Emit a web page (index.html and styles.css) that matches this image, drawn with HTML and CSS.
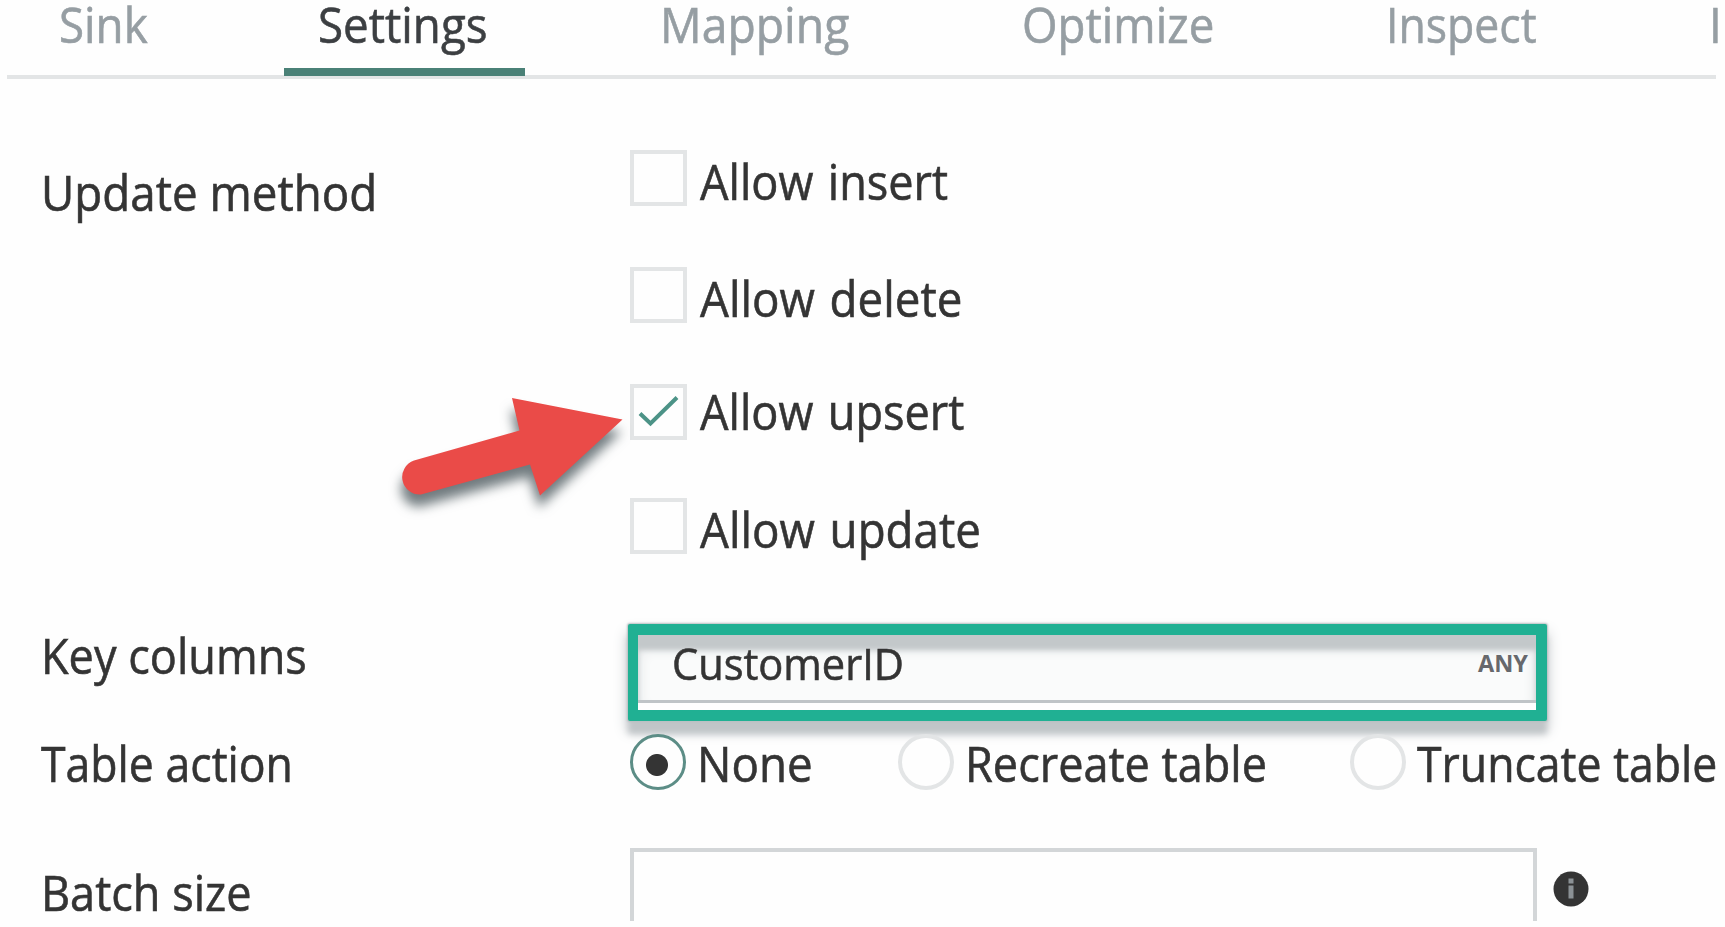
FILE: index.html
```html
<!DOCTYPE html>
<html lang="en">
<head>
<meta charset="utf-8">
<title>Sink settings</title>
<link rel="stylesheet" href="styles.css">
</head>
<body>
<nav class="tabs">
  <a class="tab"><span class="txt">Sink</span></a>
  <a class="tab active"><span class="txt">Settings</span></a>
  <a class="tab mapping"><span class="txt wide">Mapping</span></a>
  <a class="tab optimize"><span class="txt">Optimize</span></a>
  <a class="tab inspect"><span class="txt tight">Inspect</span></a>
  <a class="tab more"><span class="txt">I</span></a>
</nav>
<main class="form">
  <section class="row methods">
    <div class="label"><span class="txt">Update method</span></div>
    <div class="checks">
      <label class="check"><span class="box"></span><span class="txt snug">Allow insert</span></label>
      <label class="check"><span class="box"></span><span class="txt">Allow delete</span></label>
      <label class="check upsert"><span class="box"><svg viewBox="0 0 56 56"><path d="M10 29.500 20.500 39.500 47 13.500"/></svg></span><span class="txt snug">Allow upsert</span></label>
      <label class="check"><span class="box"></span><span class="txt">Allow update</span></label>
    </div>
  </section>
  <section class="row keys">
    <div class="label"><span class="txt snug">Key columns</span></div>
    <div class="frame">
      <div class="field"><span class="txt wide">CustomerID</span><span class="type">ANY</span></div>
    </div>
  </section>
  <section class="row action">
    <div class="label"><span class="txt tight">Table action</span></div>
    <div class="radios">
      <label class="radio on"><span class="ring"></span><span class="txt">None</span></label>
      <label class="radio"><span class="ring"></span><span class="txt snug">Recreate table</span></label>
      <label class="radio"><span class="ring"></span><span class="txt tight">Truncate table</span></label>
    </div>
  </section>
  <section class="row batch">
    <div class="label"><span class="txt snug">Batch size</span></div>
    <div class="input"></div>
    <svg class="info" viewBox="0 0 36 36"><circle cx="18" cy="18" r="17.500"/><path d="M18 7.500v5M18 14.500v13"/></svg>
  </section>
</main>
<svg class="arrow" viewBox="380 380 260 140"><path d="M622.500 419.500 512 398 519.500 430.500 414 460.500A17.500 17.500 0 0 0 421 494.500L530 464.500 540 495.500Z"/></svg>
</body>
</html>
```
FILE: styles.css
```css
* { box-sizing: border-box; }
body {
  margin: 0;
  width: 1725px;
  height: 927px;
  overflow: hidden;
  position: relative;
  background: #fefefe;
  color: #343434;
  font: 49px/56px "Open Sans", "Noto Sans", sans-serif;
}
.txt {
  display: block;
  white-space: nowrap;
  transform: scaleX(.933);
  transform-origin: 0 50%;
  -webkit-text-stroke: .6px currentColor;
}
.txt.wide { transform: scaleX(.945); }
.txt.snug { transform: scaleX(.92); }
.txt.tight { transform: scaleX(.91); }

.tabs {
  display: grid;
  grid-template-columns: 277px 241px 478px 363px 325px 25px;
  height: 79px;
  margin: 0 9px 0 7px;
  border-bottom: 4px solid #e3e5e6;
  line-height: 46px;
  color: #969ea3;
}
.tab { height: 76px; padding: .5px 0 0 52px; }
.tab.mapping { padding-left: 135px; }
.tab.optimize { padding-left: 19px; }
.tab.inspect { padding-left: 20px; }
.tab.more { padding-left: 18px; }
.tab.active { padding-left: 34px; border-bottom: 8px solid #4a8177; color: #3c3f42; z-index: 1; }

.form { padding: 71px 0 0 40px; }
.row { display: flex; align-items: flex-start; }
.label { width: 590px; flex: none; padding-left: 1px; }
.methods { height: 474px; }
.methods .label { padding-top: 14px; }
.checks { display: grid; grid-template-rows: 117px 117px 113.5px 57px; }
.check { display: flex; gap: 13px; word-spacing: 3px; }
.check .txt { margin-top: 3px; }
.check.upsert .txt { margin-top: -1px; }
.box { width: 57px; height: 56px; border: 4px solid #e3e5e6; flex: none; }
.box svg { display: block; width: 56px; height: 56px; margin: -4px; fill: none; stroke: #4c9387; stroke-width: 4px; }

.keys { height: 110px; }
.keys .label { padding-top: 3px; }
.frame {
  width: 919px;
  height: 97px;
  margin-left: -2px;
  border: 11px solid #20b093;
  border-left-width: 10px;
  border-radius: 2px;
  background: #fefefe;
  box-shadow: 0 0 2px 1px #b9bfc2, 0 13px 6px #c0c5c8, 0 9px 14px 2px #d5d8da;
}
.field {
  display: flex;
  justify-content: space-between;
  height: 68px;
  padding: 0 8px 0 33.5px;
  border-bottom: 3px solid #bfc4c7;
  background: #fafbfb;
  box-shadow: inset 0 15px 5px #c3c8ca, inset 0 13px 14px #dcdfe1;
  font-size: 44px;
}
.type { font-size: 23.500px; font-weight: 700; color: #66686c; }

.action { height: 114px; }
.action .txt { margin-top: .5px; }
.radios { display: grid; grid-template-columns: 268px 452px 375px; }
.radio { display: flex; gap: 10.5px; }
.ring { width: 56px; height: 56px; flex: none; border: 4px solid #e3e5e6; border-radius: 50%; background: #fefefe; }
.on .ring { border: 3.500px solid #5c8d86; background: #fefefe radial-gradient(circle at 24px 28px, #343434 10.500px, transparent 11.500px); }

.batch .label { padding-top: 16px; }
.input { width: 907px; height: 73px; border: 4px solid #d3d6d8; border-bottom: 0; }
.info { width: 36px; height: 36px; margin: 23px 0 0 16px; fill: #343434; }
.info path { stroke: #8b9195; stroke-width: 5px; }
.arrow { position: absolute; left: 380px; top: 380px; width: 260px; height: 140px; fill: #ea4b48; filter: drop-shadow(-1px 12px 6px rgba(45, 60, 66, .68)); overflow: visible; }
```
